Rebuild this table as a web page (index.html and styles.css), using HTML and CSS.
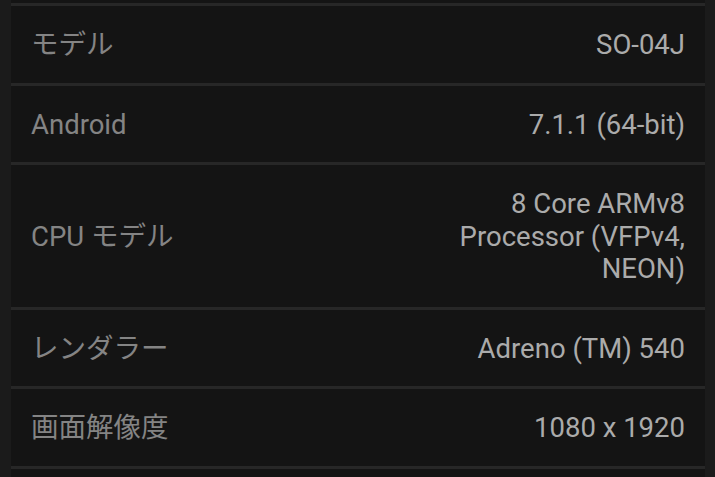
FILE: index.html
```html
<!DOCTYPE html>
<html lang="ja">
<head>
<meta charset="utf-8">
<link rel="stylesheet" href="styles.css">
</head>
<body>
<div class="list">
  <div class="row row-stub"></div>
  <div class="row"><div class="label">モデル</div><div class="value">SO-04J</div></div>
  <div class="row"><div class="label">Android</div><div class="value">7.1.1 (64-bit)</div></div>
  <div class="row"><div class="label">CPU モデル</div><div class="value">8 Core ARMv8 Processor (VFPv4, NEON)</div></div>
  <div class="row"><div class="label">レンダラー</div><div class="value">Adreno (TM) 540</div></div>
  <div class="row"><div class="label">画面解像度</div><div class="value">1080 x 1920</div></div>
  <div class="row"><div class="label">&nbsp;</div><div class="value">&nbsp;</div></div>
</div>
</body>
</html>
```

FILE: styles.css
```css
html, body {
  margin: 0;
  padding: 0;
  background: #1b1b1b;
  height: 100%;
  overflow: hidden;
}
body {
  font-family: Roboto, "Noto Sans CJK JP", sans-serif;
  font-size: 27.5px;
}
.list {
  margin: 0 10px 0 11px;
  display: flex;
  flex-direction: column;
  gap: 3px;
  background: #272727;
}
.row {
  background: #141414;
  display: flex;
  align-items: center;
  justify-content: space-between;
  padding: 23px 20px 21px;
  line-height: 32.5px;
}
.row-stub {
  padding: 0;
  height: 3px;
}
.label {
  color: #848484;
  white-space: nowrap;
}
.value {
  color: #ababab;
  text-align: right;
  max-width: 240px;
}
```
